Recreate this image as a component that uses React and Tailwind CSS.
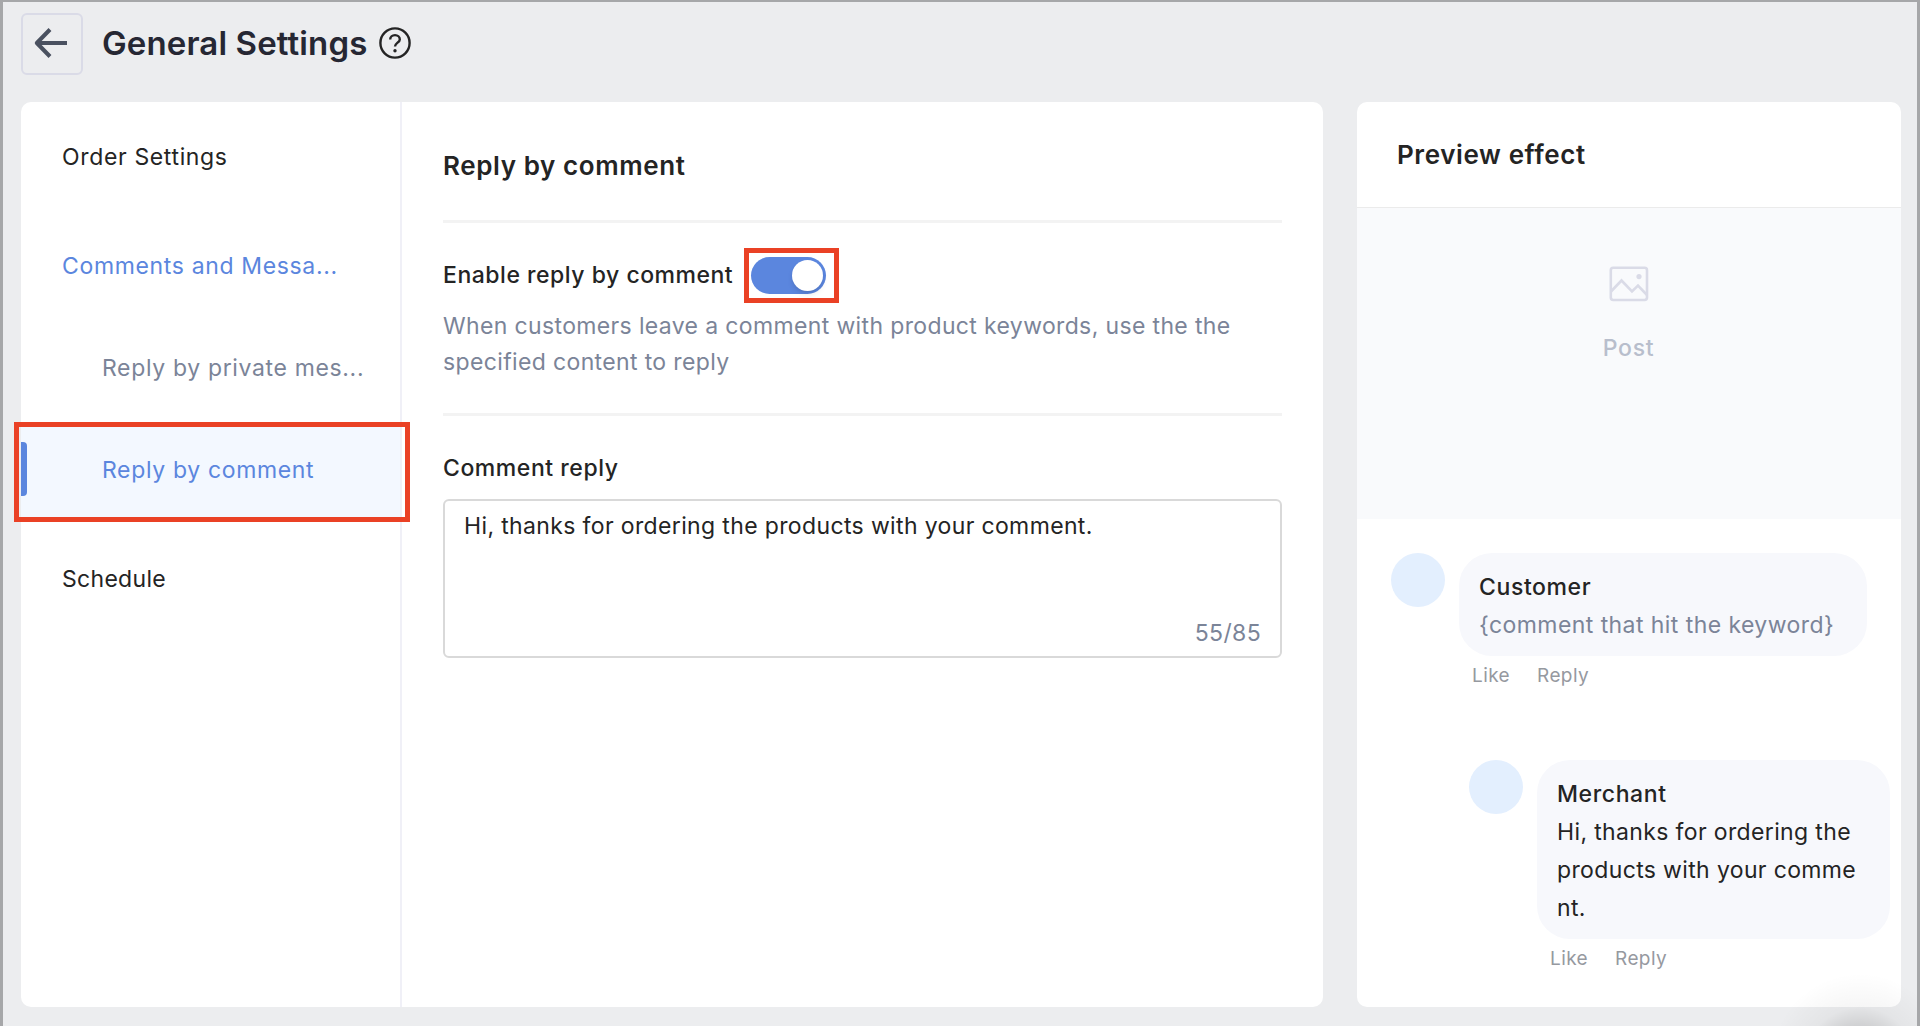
import React, { useState } from 'react';

const BackIcon = () => (
    <svg width="34" height="30" viewBox="0 0 34 30" fill="none" stroke="#4a5160" strokeWidth="4">
        <path d="M33 15H3" />
        <path d="M16 1.5L2.8 15L16 28.5" strokeLinejoin="round" />
    </svg>
);

const HelpIcon = () => (
    <svg width="32" height="32" viewBox="0 0 32 32" fill="none" stroke="#242424" strokeWidth="2.4">
        <circle cx="16" cy="16" r="14.6" />
        <path d="M11.2 12.6C11.2 9.9 13.3 8.1 16 8.1C18.7 8.1 20.8 9.9 20.8 12.4C20.8 15.4 16 16 16 19.6" />
        <circle cx="16" cy="23.8" r="1.7" fill="#242424" stroke="none" />
    </svg>
);

const PictureIcon = () => (
    <svg width="40" height="36" viewBox="0 0 40 36" fill="none" stroke="#dadbe7" strokeWidth="2.6">
        <rect x="1.8" y="1.8" width="36.2" height="32.2" rx="2.4" />
        <path d="M2 25.5L12.5 14.5L23 25.5L29 19.5L38 29" />
        <circle cx="30" cy="10.6" r="2.6" fill="#dadbe7" stroke="none" />
    </svg>
);

const Comment = ({ name, children, className, bubbleClass }) => (
    <div className={`flex gap-3.5 ${className}`}>
        <div className="w-[54px] h-[54px] shrink-0 rounded-full bg-[#e3effe]" />
        <div>
            <div className={`rounded-[33px] bg-[#f7f8fc] text-[23px] leading-[38px] ${bubbleClass}`}>
                <p className="font-medium tracking-[0.6px]">{name}</p>
                {children}
            </div>
            <div className="flex gap-[27px] pl-[13px] mt-1.5 text-[19px] leading-7 text-[#96999f] tracking-[0.4px]">
                <span>Like</span>
                <span>Reply</span>
            </div>
        </div>
    </div>
);

const App = () => {
    const [enabled, setEnabled] = useState(true);
    const reply = 'Hi, thanks for ordering the products with your comment.';

    return (
        <div className="relative h-[1026px] w-[1920px] overflow-hidden border-x-[3px] border-t-2 border-[#a6a7a9] bg-[#ecedef] font-['Inter',sans-serif] text-[#242424]">
            <header className="flex items-center h-[62px] mt-[11px] ml-[18px]">
                <button className="flex items-center justify-center w-[62px] h-[62px] pb-0.5 pr-0.5 rounded-md border-2 border-[#dadbe7]">
                    <BackIcon />
                </button>
                <h1 className="ml-[19px] mb-0.5 text-[33px] leading-[44px] font-semibold text-[#262733] tracking-[0.12px]">General Settings</h1>
                <span className="ml-3 mb-0.5"><HelpIcon /></span>
            </header>

            <div className="flex gap-[34px] mt-[27px] pl-[18px]">
                <main className="flex w-[1302px] h-[905px] rounded-[10px] bg-white">
                    <nav className="w-[381px] shrink-0 border-r-2 border-[#f0f0f7] text-[23px] tracking-[0.65px]">
                        <a className="flex items-center h-[109px] pt-0.5 pl-[41px]">Order Settings</a>
                        <a className="flex items-center h-[109px] pt-0.5 pl-[41px] text-[#5b86de]">Comments and Messa...</a>
                        <a className="flex items-center h-[96px] pl-[81px] text-[#7b8498]">Reply by private mes...</a>
                        <div className="relative flex items-center h-[98px] mt-[7px] pb-1.5 w-[379px] bg-[#f3f8ff]">
                            <span className="w-1.5 h-[54px] rounded-r-sm bg-[#5b86de]" />
                            <a className="pt-0.5 pl-[75px] text-[#5b86de]">Reply by comment</a>
                            <div className="absolute -left-[7px] top-[-1px] w-[396px] h-[100px] border-[5px] border-[#ea4125]" />
                        </div>
                        <a className="flex items-center h-[109px] mt-1 pl-[41px] tracking-[0.3px]">Schedule</a>
                    </nav>

                    <section className="w-[880px] pl-[41px]">
                        <h2 className="pt-[46px] h-[118px] text-[26px] leading-9 font-semibold tracking-[0.6px]">Reply by comment</h2>
                        <div className="h-[196px] pt-[25px] border-y-[3px] border-[#f3f3f3]">
                            <div className="flex items-center h-[55px]">
                                <span className="text-[23px] font-medium tracking-[0.52px]">Enable reply by comment</span>
                                <div className="ml-[11px] flex items-center w-[95px] h-[55px] pl-0.5 border-[5px] border-[#ea4125]">
                                    <button
                                        onClick={() => setEnabled(!enabled)}
                                        className={`flex items-center w-[75px] h-[37px] px-[3px] rounded-full ${
                                            enabled ? 'justify-end bg-[#5b86de]' : 'justify-start bg-gray-300'
                                        }`}
                                    >
                                        <span className="w-[31px] h-[31px] rounded-full bg-white shadow-md" />
                                    </button>
                                </div>
                            </div>
                            <p className="mt-[5px] text-[23px] leading-9 text-[#7b8498] tracking-[0.36px]">
                                When customers leave a comment with product keywords, use the the
                                <br />
                                specified content to reply
                            </p>
                        </div>
                        <h3 className="mt-[34px] text-[23px] leading-9 font-medium tracking-[0.55px]">Comment reply</h3>
                        <div className="flex flex-col justify-between mt-[13px] h-[159px] px-[19px] pt-[7px] pb-[5px] rounded-md border-2 border-[#d9d9d9] text-[23px] leading-9 tracking-[0.36px]">
                            <p>{reply}</p>
                            <p className="text-right text-[#7b8498]">{reply.length}/85</p>
                        </div>
                    </section>
                </main>

                <aside className="w-[544px] h-[905px] rounded-[10px] bg-white overflow-hidden">
                    <h2 className="h-[106px] pl-10 pt-[35px] border-b border-[#ebebeb] text-[26px] leading-9 font-semibold tracking-[0.6px]">Preview effect</h2>
                    <div className="flex flex-col items-center h-[311px] pt-[58px] pr-px bg-[#f9fafc]">
                        <PictureIcon />
                        <span className="mt-7 text-[23px] leading-9 font-medium text-[#b8becc] tracking-[0.7px]">Post</span>
                    </div>
                    <Comment name="Customer" className="pl-[34px] pt-[34px]" bubbleClass="w-[408px] h-[103px] pl-5 pt-[15px]">
                        <p className="text-[#7b8498] tracking-[0.43px]">{'{comment that hit the keyword}'}</p>
                    </Comment>
                    <Comment name="Merchant" className="pl-28 pt-[70px]" bubbleClass="w-[353px] h-[179px] pl-5 pr-8 pt-[15px]">
                        <p className="break-all tracking-[0.36px]">{reply}</p>
                    </Comment>
                </aside>
            </div>

            {/* shadow of the floating button below the fold */}
            <div className="absolute left-[1767px] top-[971px] w-[180px] h-[180px] rounded-full bg-[radial-gradient(closest-side,rgba(0,0,0,0.2),rgba(0,0,0,0.12)_41%,rgba(0,0,0,0.035)_62%,transparent)]" />
        </div>
    );
};

export default App;
